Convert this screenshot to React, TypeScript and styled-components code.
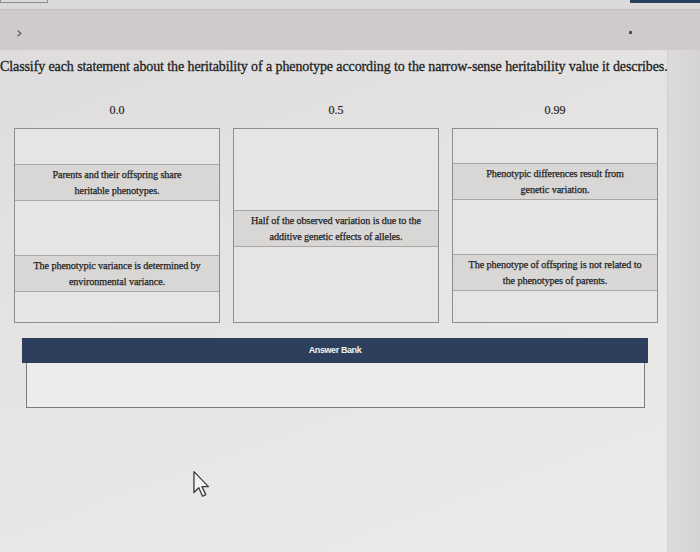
import React from 'react';
import styled, { createGlobalStyle } from 'styled-components';

const GlobalStyle = createGlobalStyle`
  html, body {
    margin: 0;
    padding: 0;
    background: #d9d6d6;
  }
  #root {
    width: 700px;
    height: 552px;
    overflow: hidden;
  }
`;

const Page = styled.div`
  width: 700px;
  height: 552px;
  display: flex;
  flex-direction: column;
  font-family: 'Liberation Serif', 'Times New Roman', serif;
  color: #1f1f1f;
`;

const TopStrip = styled.div`
  height: 9px;
  background: #dcd9d9;
  border-bottom: 1px solid #c2bebe;
  display: flex;
  justify-content: space-between;
  align-items: flex-start;
`;

const TabStub = styled.div`
  width: 46px;
  height: 2px;
  border: 1px solid #8c8a8a;
  border-top: none;
`;

const ButtonStub = styled.div`
  width: 70px;
  height: 3px;
  background: #26405e;
`;

const NavBar = styled.div`
  height: 40px;
  background: #cfcbcb;
  display: flex;
  align-items: center;
  justify-content: space-between;
  padding: 0 68px 0 0;
  box-sizing: border-box;
`;

const Chevron = styled.span`
  font-family: 'DejaVu Sans', sans-serif;
  font-size: 16px;
  color: #555;
  margin-left: 16px;
  margin-top: 4px;
`;

const Dot = styled.span`
  width: 3px;
  height: 3px;
  background: #444;
  border-radius: 1px;
  margin-top: 4px;
`;

const Main = styled.div`
  flex: 1;
  display: flex;
`;

const Content = styled.div`
  width: 667px;
  background: linear-gradient(160deg, #dedcdc 0%, #e6e4e3 40%, #ecebea 100%);
  padding-top: 10px;
  box-sizing: border-box;
  display: flex;
  flex-direction: column;
`;

const Gutter = styled.div`
  flex: 1;
  background: linear-gradient(90deg, #dcdada, #d6d3d3);
  border-left: 1px solid #d2cfcf;
`;

const Title = styled.h1`
  margin: 0;
  font-size: 14px;
  font-weight: normal;
  line-height: 14px;
  white-space: nowrap;
  letter-spacing: -0.1px;
  -webkit-text-stroke: 0.3px #222;
`;

const Board = styled.div`
  display: grid;
  grid-template-columns: repeat(3, 206px);
  column-gap: 13px;
  padding-left: 14px;
  margin-top: 29px;
`;

const Heading = styled.div`
  text-align: center;
  font-size: 12px;
  line-height: 14px;
  height: 14px;
  margin-bottom: 11px;
  -webkit-text-stroke: 0.2px #222;
`;

const Bin = styled.div`
  height: 195px;
  border: 1px solid #8f8d8d;
  background: #e7e5e4;
  box-sizing: border-box;
  display: flex;
  flex-direction: column;
`;

const Chip = styled.div<{ $top: number }>`
  margin-top: ${p => p.$top}px;
  height: 37px;
  box-sizing: border-box;
  border-top: 1px solid #a9a7a6;
  border-bottom: 1px solid #a9a7a6;
  background: #d9d7d6;
  display: flex;
  align-items: center;
  justify-content: center;
  text-align: center;
  font-size: 10.2px;
  line-height: 16px;
  white-space: nowrap;
  letter-spacing: -0.1px;
  -webkit-text-stroke: 0.25px #222;
`;

const Bank = styled.div`
  margin: 15px 0 0 22px;
  width: 626px;
`;

const BankHeader = styled.div`
  height: 25px;
  background: #2e3f5d;
  color: #f2f2f2;
  font-family: 'Liberation Sans', Arial, sans-serif;
  font-weight: bold;
  font-size: 9px;
  letter-spacing: -0.4px;
  display: flex;
  justify-content: center;
  padding-top: 7px;
  box-sizing: border-box;
`;

const BankBody = styled.div`
  height: 44px;
  margin: 0 3px 0 4px;
  border: 1px solid #7c7a7a;
  border-top: none;
  background: #edecec;
`;

const CursorArea = styled.div`
  padding: 62px 0 0 192px;
`;

type ChipData = { top: number; text: React.ReactNode };

const columns: { label: string; chips: ChipData[] }[] = [
  {
    label: '0.0',
    chips: [
      { top: 35, text: <>Parents and their offspring share<br />heritable phenotypes.</> },
      { top: 54, text: <>The phenotypic variance is determined by<br />environmental variance.</> },
    ],
  },
  {
    label: '0.5',
    chips: [
      { top: 81, text: <>Half of the observed variation is due to the<br />additive genetic effects of alleles.</> },
    ],
  },
  {
    label: '0.99',
    chips: [
      { top: 34, text: <>Phenotypic differences result from<br />genetic variation.</> },
      { top: 54, text: <>The phenotype of offspring is not related to<br />the phenotypes of parents.</> },
    ],
  },
];

const Pointer = () => (
  <svg width="20" height="30" viewBox="0 0 18 28">
    <path
      d="M1.5 1.5 L1.5 21 L6 16.5 L9.5 24.5 L12.5 23 L9 15.5 L15 15.5 Z"
      fill="#f4f4f4"
      stroke="#3a3a3a"
      strokeWidth="1.2"
      strokeLinejoin="round"
    />
  </svg>
);

export default function App() {
  return (
    <Page>
      <GlobalStyle />
      <TopStrip>
        <TabStub />
        <ButtonStub />
      </TopStrip>
      <NavBar>
        <Chevron>›</Chevron>
        <Dot />
      </NavBar>
      <Main>
        <Content>
          <Title>
            Classify each statement about the heritability of a phenotype according to the narrow-sense heritability value it describes.
          </Title>
          <Board>
            {columns.map(col => (
              <div key={col.label}>
                <Heading>{col.label}</Heading>
                <Bin>
                  {col.chips.map((chip, i) => (
                    <Chip key={i} $top={chip.top}>{chip.text}</Chip>
                  ))}
                </Bin>
              </div>
            ))}
          </Board>
          <Bank>
            <BankHeader>Answer Bank</BankHeader>
            <BankBody />
          </Bank>
          <CursorArea>
            <Pointer />
          </CursorArea>
        </Content>
        <Gutter />
      </Main>
    </Page>
  );
}
